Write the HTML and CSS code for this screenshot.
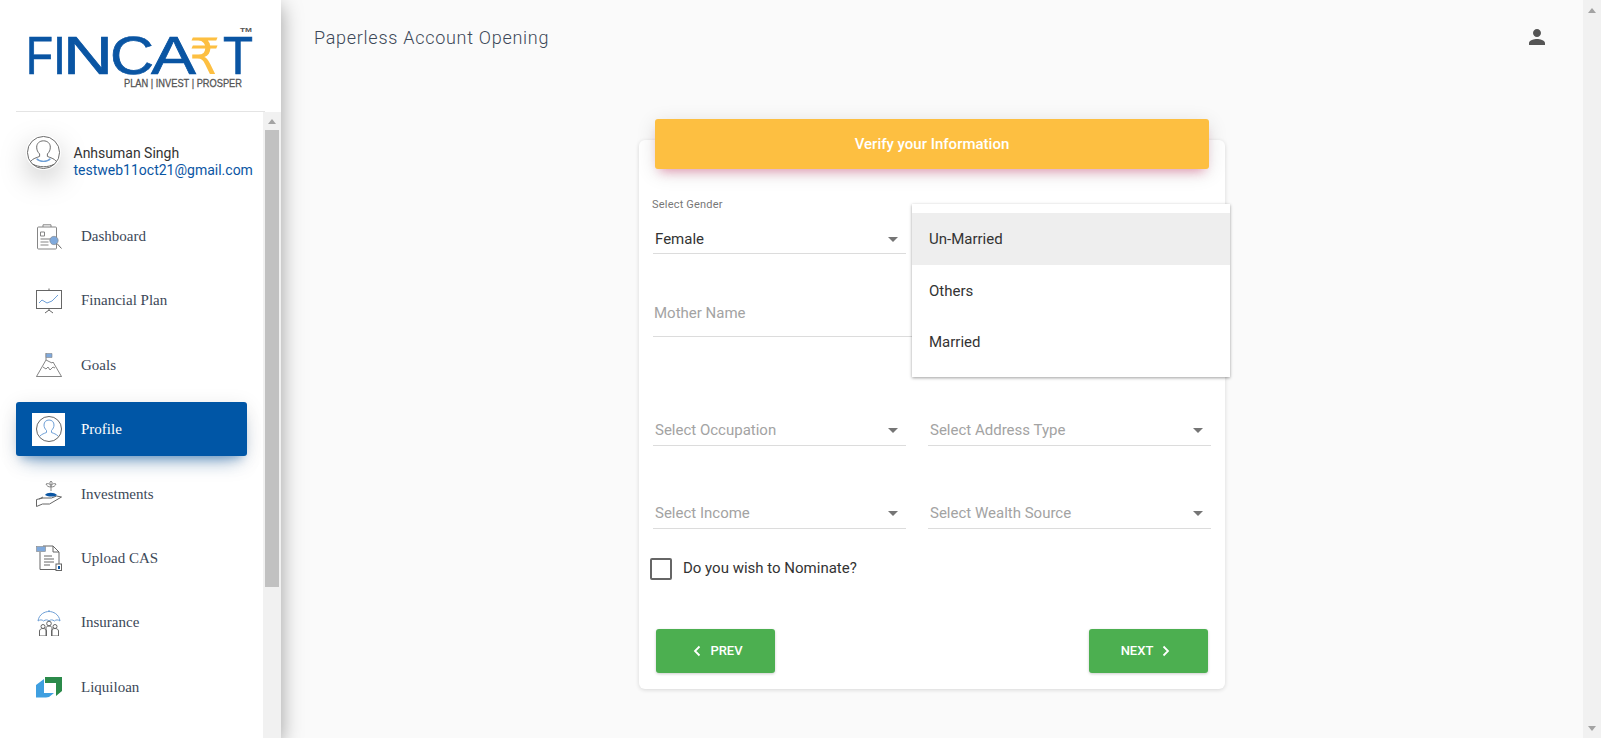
FILE: index.html
```html
<!DOCTYPE html>
<html lang="en">
<head>
<meta charset="utf-8">
<title>Paperless Account Opening</title>
<link rel="stylesheet" href="styles.css">
</head>
<body>
<div class="app">
  <aside class="sidebar">
    <div class="brand">
      <svg class="logo" viewBox="0 0 281 111" width="281" height="111">
        <g class="logo-main">
          <text x="26" y="74" textLength="27" lengthAdjust="spacingAndGlyphs">F</text>
          <text x="53" y="74" textLength="13" lengthAdjust="spacingAndGlyphs">I</text>
          <text x="63" y="74" textLength="50" lengthAdjust="spacingAndGlyphs">N</text>
          <text x="110" y="74" textLength="44" lengthAdjust="spacingAndGlyphs">C</text>
          <text x="151" y="74" textLength="45" lengthAdjust="spacingAndGlyphs">A</text>
          <text x="223" y="74" textLength="30" lengthAdjust="spacingAndGlyphs">T</text>
        </g>
        <text class="logo-rupee" x="189" y="74" textLength="31" lengthAdjust="spacingAndGlyphs">₹</text>
        <text class="logo-tm" x="240" y="32" textLength="12" lengthAdjust="spacingAndGlyphs">TM</text>
        <text class="logo-tag" x="124" y="87" textLength="118" lengthAdjust="spacingAndGlyphs">PLAN | INVEST | PROSPER</text>
      </svg>
    </div>
    <div class="side-body">
      <div class="side-scroll">
        <div class="user">
          <span class="avatar">
            <svg viewBox="0 0 36 36" width="35" height="35">
              <circle cx="18" cy="18" r="16.500" class="i-d"/>
              <path class="i-d" d="M5 27c2-3 6-3.500 9-5v-2.500c-2-2-3-4-3-7 0-4 3-6.500 7-6.500s7 2.500 7 6.500c0 3-1 5-3 7V22c3 1.500 7 2 9 5"/>
              <path class="i-b i-thick" d="M11 24.500c3 3.500 11 3.500 14 0"/>
              <path class="i-d" d="M7 30c6 3.500 16 3.500 22 0"/>
            </svg>
          </span>
          <div class="user-text">
            <div class="user-name">Anhsuman Singh</div>
            <div class="user-mail">testweb11oct21@gmail.com</div>
          </div>
        </div>
        <nav class="menu">
          <a class="item"><span class="ico"><svg viewBox="0 0 26 26" width="26" height="26">
            <rect class="i-g" x="1.500" y="3" width="19" height="22" rx="1"/><path class="i-g" d="M7 3V.800h8V3M4.500 8h4v4h-4zM4.500 18h8M4.500 21h8"/><path class="i-l" d="M4.500 15h11"/><circle class="i-bf" cx="18" cy="16.500" r="4.200"/><path class="i-d" d="M21 19.500l4.500 5"/>
          </svg></span>Dashboard</a>
          <a class="item"><span class="ico"><svg viewBox="0 0 26 26" width="26" height="26">
            <rect class="i-d" x="0.500" y="2.500" width="25" height="18"/><path class="i-d" d="M13 0.500v2M13 20.500v2M9 25l4-3 4 3"/><path class="i-b" d="M3 15l3-3 5 3 5-2 6-6"/>
          </svg></span>Financial Plan</a>
          <a class="item"><span class="ico"><svg viewBox="0 0 26 26" width="26" height="26">
            <path class="i-g" d="M0.500 24.500L10 8l6 3 1-1 8.500 14.500zM0.500 24.500h25M7 15l3 2 2-2 2 3 3-3 2 1M10 8V1"/><path class="i-bf" d="M10 1.500h6v4h-6z"/>
          </svg></span>Goals</a>
          <a class="item active"><span class="ico"><svg viewBox="0 0 26 26" width="26" height="26">
            <circle class="i-d" cx="13" cy="13" r="12.500"/><path class="i-b" d="M4 20c2-2 4-2.500 6.500-3.500v-2c-1.500-1.500-2.500-3.500-2.500-5.500 0-3 2-5 5-5s5 2 5 5c0 2-1 4-2.500 5.500v2c2.500 1 4.500 1.500 6.500 3.500"/>
          </svg></span>Profile</a>
          <a class="item"><span class="ico"><svg viewBox="0 0 26 26" width="26" height="26">
            <path class="i-g" d="M15 10V6M15 6c-3 0-4-1-5-3 3-1 4 0 5 3zM15 6c3 0 4-1 5-3-3-1-4 0-5 3zM15 4c-1.500-1-1.500-3 0-4 1.500 1 1.500 3 0 4z"/><path class="i-d" d="M0.500 18.500v7l6-2.500h7l12-7-5-1-5 2H7zM3 18l4-2"/><path class="i-blue" d="M9 14c2-3 9-3 12 0-3 2-8 2-12 0z"/>
          </svg></span>Investments</a>
          <a class="item"><span class="ico"><svg viewBox="0 0 26 26" width="26" height="26">
            <path class="i-d" d="M4 7V24.500h16M7 1h10l6 6v12M17 1v6h6M8 11h8M8 14h10M8 17h10M8 20h6"/><rect class="i-bf" x="0.500" y="1.500" width="9" height="5"/><rect class="i-d" x="20" y="19" width="5.500" height="6.500"/><rect class="i-blue" x="22" y="21" width="2" height="3"/>
          </svg></span>Upload CAS</a>
          <a class="item"><span class="ico"><svg viewBox="0 0 26 26" width="26" height="26">
            <path class="i-b" d="M2 11C3 4 9 1.500 13 1.500S23 4 24 11c-2-1.500-4-1.500-5.500 0-2-1.500-4-1.500-5.500 0-1.500-1.500-3.500-1.500-5.500 0C6 9.500 4 9.500 2 11zM13 0v1.500"/>
            <circle class="i-d" cx="13" cy="13.500" r="2.300"/><circle class="i-d" cx="7" cy="16.500" r="2"/><circle class="i-d" cx="19" cy="16.500" r="2"/><path class="i-d" d="M3.500 26v-5c0-1.500 1.500-2.500 3.500-2.500s3.500 1 3.500 2.500v5zM10 26v-8c0-1 1-2 3-2s3 1 3 2v8M15.500 26v-5c0-1.500 1.500-2.500 3.500-2.500s3.500 1 3.500 2.500v5z"/>
          </svg></span>Insurance</a>
          <a class="item"><span class="ico"><svg viewBox="0 0 26 26" width="26" height="26">
            <path class="f-green" d="M9 3h17v14l-6 5V9H9z"/><path class="f-sky" d="M0 11l8-6v14h10l-5 4-3 .500H0z"/>
          </svg></span>Liquiloan</a>
        </nav>
      </div>
      <div class="side-bar">
        <span class="arrow-up"></span>
        <span class="thumb"></span>
      </div>
    </div>
  </aside>

  <main class="main">
    <header class="topbar">
      <h1 class="title">Paperless Account Opening</h1>
      <svg class="person" viewBox="0 0 24 24" width="24" height="24"><path d="M12 12c2.210 0 4-1.790 4-4s-1.790-4-4-4-4 1.790-4 4 1.790 4 4 4zm0 2c-2.670 0-8 1.340-8 4v2h16v-2c0-2.660-5.330-4-8-4z"/></svg>
    </header>

    <section class="card">
      <div class="card-head">Verify your Information</div>
      <form class="form">
        <div class="row-first">
          <div class="small-label">Select Gender</div>
          <div class="select"><span class="value">Female</span><span class="caret"></span></div>
        </div>
        <div class="input-line">Mother Name</div>
        <div class="grid">
          <div class="select"><span class="ph">Select Occupation</span><span class="caret"></span></div>
          <div class="select"><span class="ph">Select Address Type</span><span class="caret"></span></div>
          <div class="select"><span class="ph">Select Income</span><span class="caret"></span></div>
          <div class="select"><span class="ph">Select Wealth Source</span><span class="caret"></span></div>
        </div>
        <label class="check"><span class="box"></span><span class="check-text">Do you wish to Nominate?</span></label>
        <div class="actions">
          <button class="btn btn-prev" type="button"><svg viewBox="0 0 10 12" width="10" height="12"><path d="M7.500 1.500L3 6l4.500 4.500"/></svg>PREV</button>
          <button class="btn btn-next" type="button">NEXT<svg viewBox="0 0 10 12" width="10" height="12"><path d="M2.500 1.500L7 6l-4.500 4.500"/></svg></button>
        </div>
      </form>
      <div class="dropdown">
        <div class="option on">Un-Married</div>
        <div class="option">Others</div>
        <div class="option">Married</div>
      </div>
    </section>
  </main>

  <div class="page-bar">
    <span class="arrow-up"></span>
    <span class="arrow-down"></span>
  </div>
</div>
</body>
</html>
```

FILE: styles.css
```css
* { box-sizing: border-box; }
html, body { margin: 0; height: 100%; overflow: hidden; }
body { font-family: Roboto, "Liberation Sans", sans-serif; background: #fafafa; color: #333; }
.app { display: flex; width: 1601px; height: 738px; }

/* Sidebar */
.sidebar { position: relative; z-index: 2; flex: 0 0 281px; height: 738px; background: #fff; box-shadow: 0 6px 20px rgba(0,0,0,.38); display: flex; flex-direction: column; }
.brand { height: 112px; flex: none; }
.brand::after { content: ""; display: block; height: 1px; margin: 0 16px; background: #e4e4e4; }
.logo { display: block; }
.logo-main text { font-family: "Liberation Sans", sans-serif; font-size: 53px; fill: #0a55a3; stroke: #0a55a3; stroke-width: .7px; }
.logo-rupee { font-family: "DejaVu Sans", sans-serif; font-size: 50px; fill: #fdbf41; }
.logo-tm { font-family: "Liberation Sans", sans-serif; font-size: 6px; font-weight: 700; fill: #555; }
.logo-tag { font-family: "Liberation Sans", sans-serif; font-size: 11px; fill: #555; stroke: #555; stroke-width: .3px; }

.side-body { flex: 1; display: flex; min-height: 0; }
.side-scroll { flex: 1; min-width: 0; }
.side-bar { flex: 0 0 18px; background: #f1f1f1; display: flex; flex-direction: column; align-items: center; padding-top: 7px; }
.side-bar .thumb { width: 14px; height: 457px; margin-top: 6px; background: #c1c1c1; }

.arrow-up { width: 0; height: 0; border: 4px solid transparent; border-top: 0; border-bottom: 5px solid #a3a3a3; }
.arrow-down { width: 0; height: 0; border: 4px solid transparent; border-bottom: 0; border-top: 5px solid #a3a3a3; }

.user { display: flex; align-items: flex-start; padding: 23px 0 0 26px; gap: 12.500px; }
.avatar { width: 35px; height: 35px; border-radius: 50%; background: #fff; box-shadow: 0 10px 30px -4px rgba(0,0,0,.34), 0 0 0 1px #fff; display: flex; flex: none; }
.avatar svg { display: block; }
.user-text { font-size: 14px; line-height: 17px; margin-top: 10px; white-space: nowrap; }
.user-name { color: #333; }
.user-mail { color: #0a55a3; }

.i-g, .i-d, .i-b, .i-l { fill: none; stroke-width: 1; }
.i-g { stroke: #858585; }
.i-d { stroke: #666; }
.i-b { stroke: #6e9fd6; }
.i-thick { stroke-width: 1.500; }
.i-l { stroke: #bdbdbd; stroke-width: 2; }
.i-bf { fill: #7fa9dc; stroke: #858585; stroke-width: .6; }
.i-blue { fill: #0a55a3; }
.f-green { fill: #2b8a4a; }
.f-sky { fill: #3f9fe0; }

.menu { display: flex; flex-direction: column; gap: 10.400px; padding: 30.500px 0 0 16px; }
.item { width: 231px; height: 54px; flex: none; display: flex; align-items: center; gap: 16px; padding-left: 16px; border-radius: 3px; font-family: "Liberation Serif", serif; font-size: 15px; color: #3c4858; }
.ico { width: 33px; height: 33px; display: flex; align-items: center; justify-content: center; flex: none; }
.ico svg { display: block; }
.item.active { margin: -.500px 0 .500px; background: #0056a6; color: #fff; box-shadow: 0 12px 20px -10px rgba(0,86,166,.5), 0 4px 20px 0 rgba(0,0,0,.1), 0 7px 8px -5px rgba(0,86,166,.3); }
.item.active .ico { background: #fff; }

/* Main */
.main { flex: 1; min-width: 0; height: 738px; }
.topbar { height: 74px; display: flex; align-items: center; justify-content: space-between; padding: 0 34px 0 33px; }
.title { margin: 0; font-size: 18px; font-weight: 300; letter-spacing: .72px; color: #3c4858; }
.person { display: block; fill: #555; }

.card { position: relative; width: 586px; height: 549px; margin: 66px auto 0; background: #fff; border-radius: 6px; box-shadow: 0 1px 4px rgba(0,0,0,.14); }
.card-head { position: relative; top: -21px; margin: 0 16px; height: 50px; background: #fdbf41; border-radius: 3px; color: #fff; font-size: 15px; font-weight: 500; line-height: 50px; text-align: center; box-shadow: 0 4px 20px 0 rgba(0,0,0,.12), 0 7px 10px -5px rgba(233,30,99,.4); }
.form { margin-top: -21px; padding: 30px 15px 0 14px; }
.small-label { font-size: 11px; line-height: 12px; letter-spacing: .2px; color: #777; margin-left: -1px; }
.row-first { width: 253px; }
.row-first .select { margin-top: 18px; }
.select { display: flex; align-items: center; justify-content: space-between; height: 25px; padding: 0 8px 4px 2px; border-bottom: 1px solid #dcdcdc; font-size: 15px; line-height: 20px; }
.grid .select { height: 26px; padding-bottom: 5px; }
.value { color: #333; }
.ph { color: #a3a3a3; }
.caret { width: 0; height: 0; border: 5px solid transparent; border-bottom: 0; border-top-color: #757575; }
.input-line { width: 300px; height: 34px; margin-top: 49px; line-height: 20px; font-size: 15px; color: #a3a3a3; padding-left: 1px; border-bottom: 1px solid #dcdcdc; }
.grid { display: grid; grid-template-columns: 253px 283px; column-gap: 22px; row-gap: 57px; margin-top: 83px; }
.check { display: flex; align-items: center; gap: 11px; margin: 29px 0 0 -3px; font-size: 15px; color: #333; height: 22px; }
.check-text { padding-bottom: 2px; }
.box { width: 22px; height: 22px; border: 2px solid #666; border-radius: 2px; background: #fff; }
.actions { display: flex; justify-content: space-between; margin: 49px 2px 0 3px; }
.btn { width: 119px; height: 44px; display: flex; align-items: center; justify-content: center; gap: 8px; border: 0; border-radius: 3px; background: #4caf50; color: #fff; font-family: inherit; font-size: 13px; font-weight: 500; box-shadow: 0 1px 3px rgba(0,0,0,.2); }
.btn-prev { padding: 0 0 2px 4px; }
.btn-next { padding: 0 5px 2px 0; }
.btn svg { display: block; margin-top: 2px; fill: none; stroke: #fff; stroke-width: 1.800; }

.dropdown { position: absolute; left: 273px; top: 64px; width: 318px; height: 173px; padding-top: 9px; background: #fff; box-shadow: 0 1px 3px rgba(0,0,0,.38); font-size: 15px; color: #333; z-index: 3; }
.option { height: 51.500px; line-height: 53px; padding-left: 17px; }
.option.on { background: #eee; }

.page-bar { flex: 0 0 18px; height: 738px; background: #f1f1f1; display: flex; flex-direction: column; align-items: center; justify-content: space-between; padding: 8px 0 7px; }
```
